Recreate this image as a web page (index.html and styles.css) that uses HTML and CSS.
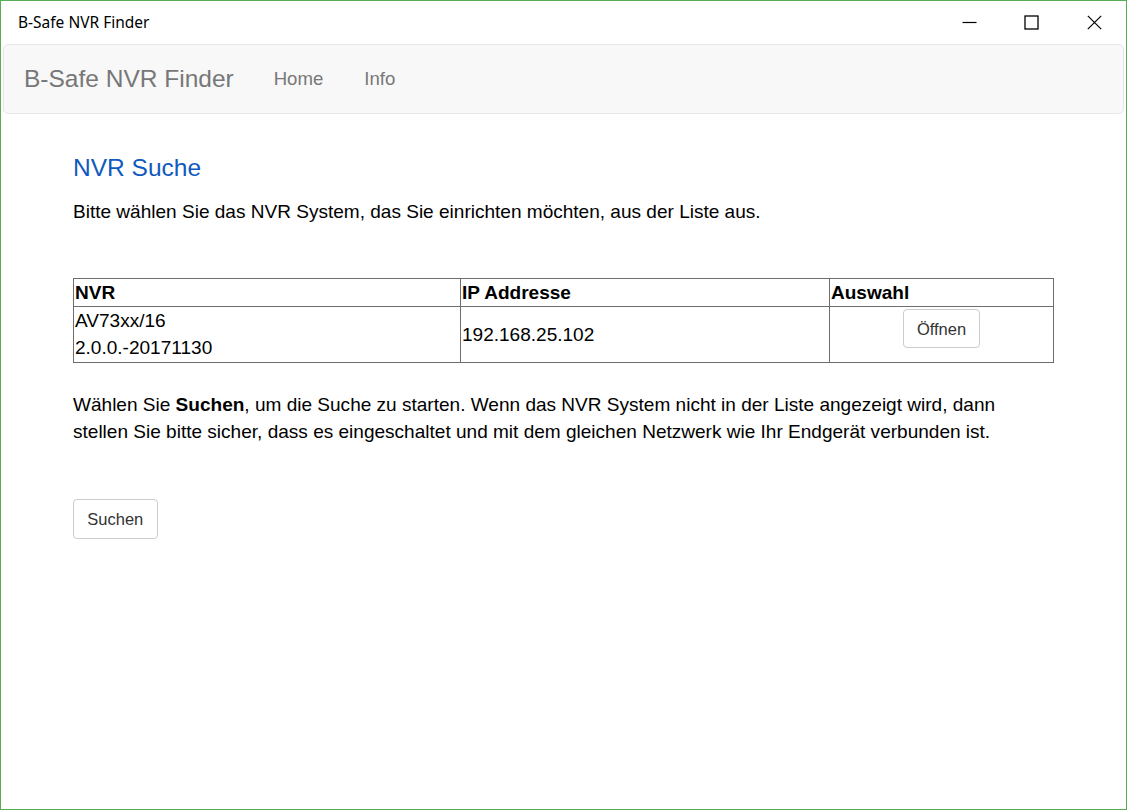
FILE: index.html
```html
<!DOCTYPE html>
<html lang="de">
<head>
<meta charset="utf-8">
<title>B-Safe NVR Finder</title>
<link rel="stylesheet" href="styles.css">
</head>
<body>
<div class="window">
  <div class="titlebar">
    <div class="wintitle">B-Safe NVR Finder</div>
    <div class="controls">
      <div class="ctl">
        <svg width="15" height="15" viewBox="0 0 15 15"><path d="M0.5 7.5H14.5" stroke="#000" stroke-width="1.2" fill="none"/></svg>
      </div>
      <div class="ctl">
        <svg width="15" height="15" viewBox="0 0 15 15"><rect x="1" y="1" width="13" height="13" stroke="#000" stroke-width="1.3" fill="none"/></svg>
      </div>
      <div class="ctl">
        <svg width="15" height="15" viewBox="0 0 15 15"><path d="M0.8 0.8L14.2 14.2M14.2 0.8L0.8 14.2" stroke="#000" stroke-width="1.2" fill="none"/></svg>
      </div>
    </div>
  </div>
  <nav class="navbar">
    <a class="brand">B-Safe NVR Finder</a>
    <a class="navlink">Home</a>
    <a class="navlink">Info</a>
  </nav>
  <main class="content">
    <h3 class="heading">NVR Suche</h3>
    <p class="intro">Bitte wählen Sie das NVR System, das Sie einrichten möchten, aus der Liste aus.</p>
    <table class="nvr-table">
      <thead>
        <tr>
          <th class="c1">NVR</th>
          <th class="c2">IP Addresse</th>
          <th class="c3">Auswahl</th>
        </tr>
      </thead>
      <tbody>
        <tr>
          <td>AV73xx/16<br>2.0.0.-20171130</td>
          <td>192.168.25.102</td>
          <td class="sel"><button class="btn">Öffnen</button></td>
        </tr>
      </tbody>
    </table>
    <p class="hint">Wählen Sie <b>Suchen</b>, um die Suche zu starten. Wenn das NVR System nicht in der Liste angezeigt wird, dann stellen Sie bitte sicher, dass es eingeschaltet und mit dem gleichen Netzwerk wie Ihr Endgerät verbunden ist.</p>
    <button class="btn">Suchen</button>
  </main>
</div>
</body>
</html>
```

FILE: styles.css
```css
html, body {
  margin: 0;
  padding: 0;
  background: #fff;
}

.window {
  width: 1127px;
  height: 810px;
  box-sizing: border-box;
  border: 1px solid #55ad55;
  display: flex;
  flex-direction: column;
  overflow: hidden;
  font-family: "Liberation Sans", Arial, sans-serif;
}

.titlebar {
  height: 43px;
  display: flex;
  align-items: center;
  justify-content: space-between;
  flex-shrink: 0;
}

.wintitle {
  font-family: "Noto Sans", "Open Sans", sans-serif;
  font-size: 15.5px;
  color: #000;
  padding-left: 17px;
  padding-bottom: 2px;
}

.controls {
  display: flex;
  height: 100%;
}

.ctl {
  width: 62.7px;
  display: flex;
  align-items: center;
  justify-content: center;
  padding-bottom: 1px;
}

.navbar {
  margin: 0 2px;
  height: 68px;
  background: #f8f8f8;
  border: 1px solid #e7e7e7;
  border-radius: 5px;
  display: flex;
  align-items: center;
  padding-left: 20px;
  flex-shrink: 0;
}

.brand {
  font-size: 24.5px;
  color: #777;
  padding-right: 20px;
}

.navlink {
  font-size: 18.6px;
  color: #777;
  padding: 0 20px;
}

.navlink + .navlink {
  padding-left: 21px;
}

.content {
  padding: 0 73px 0 72px;
  color: #000;
  font-size: 19.05px;
  line-height: 27px;
}

.heading {
  font-size: 24.5px;
  line-height: 27px;
  font-weight: normal;
  color: #1059be;
  margin: 40px 0 17px;
}

.intro {
  margin: 0 0 53px;
}

.nvr-table {
  width: 981px;
  border-collapse: collapse;
  table-layout: fixed;
}

.nvr-table th,
.nvr-table td {
  border: 1px solid #6e6e6e;
  padding: 0 1px;
  text-align: left;
  vertical-align: middle;
}

.nvr-table td {
  padding-bottom: 1px;
}

.nvr-table th {
  font-weight: bold;
}

.c1 { width: 384px; }
.c2 { width: 366px; }

.nvr-table td.sel {
  text-align: center;
  vertical-align: top;
  padding-top: 2px;
}

.hint {
  margin: 28px 0 54px;
}

.btn {
  font-family: "Liberation Sans", Arial, sans-serif;
  font-size: 16.5px;
  line-height: 24px;
  color: #333;
  background: #fff;
  border: 1px solid #ccc;
  border-radius: 4px;
  padding: 7px 13.3px;
  margin: 0;
}

.sel .btn {
  padding: 6.5px 13.3px;
}
```
